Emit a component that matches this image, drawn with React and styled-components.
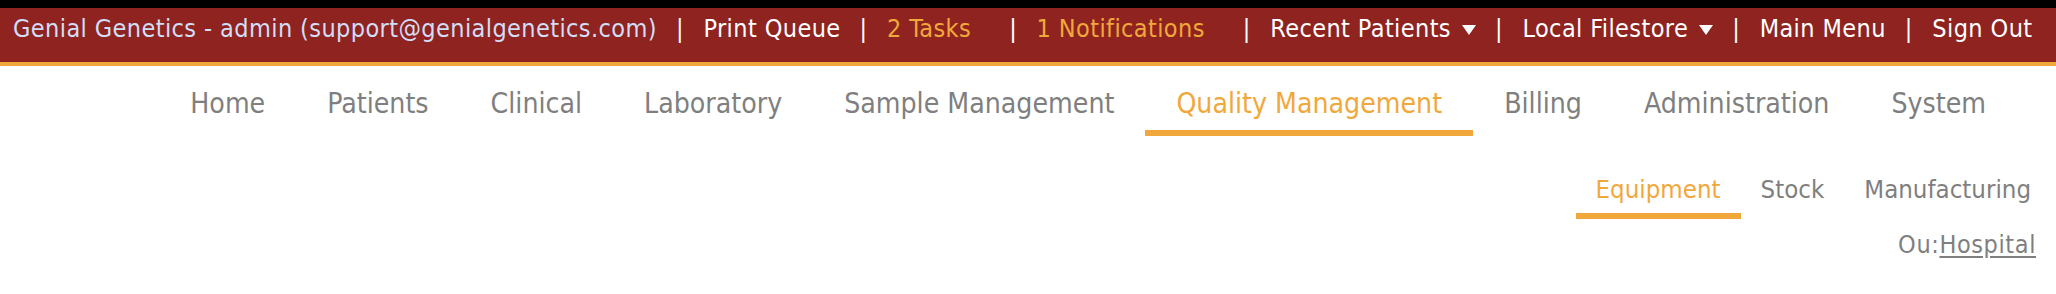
import React from "react";
import styled, { createGlobalStyle } from "styled-components";

const colors = {
  bar: "#8f231f",
  strip: "#000000",
  accent: "#f1a83b",
  user: "#d2ddf6",
  white: "#ffffff",
  grey: "#7f7f7f",
};

const font = `"DejaVu Sans Condensed", "DejaVu Sans", Tahoma, sans-serif`;

const GlobalStyle = createGlobalStyle`
  html, body {
    margin: 0;
    padding: 0;
    background: #ffffff;
  }
  body {
    font-family: ${font};
    font-stretch: condensed;
  }
`;

const Page = styled.div`
  display: flex;
  flex-direction: column;
  width: 2056px;
  height: 294px;
  overflow: hidden;
`;

const TopBar = styled.header`
  display: flex;
  align-items: flex-start;
  height: 48px;
  padding: 6px 0 0 13px;
  background-color: ${colors.bar};
  border-top: 8px solid ${colors.strip};
  border-bottom: 4px solid ${colors.accent};
  font-size: 25px;
  line-height: 30px;
  letter-spacing: 0.4px;
  white-space: nowrap;
`;

const TopLink = styled.a`
  display: flex;
  align-items: center;
  color: ${({ tone }) =>
    tone === "user"
      ? colors.user
      : tone === "alert"
      ? colors.accent
      : colors.white};
  padding-right: ${({ spaced }) => (spaced ? "19px" : "0")};
  text-decoration: none;
  cursor: pointer;
`;

const Separator = styled.span`
  color: ${colors.white};
  margin: 0 19.5px 0 19px;
`;

const Caret = styled.span`
  display: inline-block;
  width: 0;
  height: 0;
  margin-left: 11px;
  margin-top: 2px;
  border-left: 7px solid transparent;
  border-right: 7px solid transparent;
  border-top: 10px solid ${colors.white};
`;

const MainNav = styled.nav`
  display: flex;
  justify-content: flex-end;
  padding-right: 39px;
`;

const MainItem = styled.a`
  padding: 20px 31px 8px;
  font-size: 28.2px;
  line-height: 36px;
  color: ${({ active }) => (active ? colors.accent : colors.grey)};
  border-bottom: 6px solid
    ${({ active }) => (active ? colors.accent : "transparent")};
  text-decoration: none;
  cursor: pointer;
`;

const SubNav = styled.nav`
  display: flex;
  justify-content: flex-end;
  padding: 38px 5px 0 0;
`;

const SubItem = styled.a`
  padding: 0 20px 9px;
  font-size: 25.6px;
  line-height: 30px;
  color: ${({ active }) => (active ? colors.accent : colors.grey)};
  border-bottom: 6px solid
    ${({ active }) => (active ? colors.accent : "transparent")};
  text-decoration: none;
  cursor: pointer;
`;

const OuLine = styled.div`
  display: flex;
  justify-content: flex-end;
  padding: 11px 20px 0 0;
  font-size: 25px;
  line-height: 30px;
  letter-spacing: 0.6px;
  color: ${colors.grey};
`;

const OuLink = styled.a`
  color: ${colors.grey};
  text-decoration: underline;
  text-underline-offset: 3px;
  cursor: pointer;
`;

const topLinks = [
  { label: "Genial Genetics - admin (support@genialgenetics.com)", tone: "user" },
  { label: "Print Queue" },
  { label: "2 Tasks", tone: "alert", spaced: true },
  { label: "1 Notifications", tone: "alert", spaced: true },
  { label: "Recent Patients", caret: true },
  { label: "Local Filestore", caret: true },
  { label: "Main Menu" },
  { label: "Sign Out" },
];

const mainLinks = [
  "Home",
  "Patients",
  "Clinical",
  "Laboratory",
  "Sample Management",
  "Quality Management",
  "Billing",
  "Administration",
  "System",
];

const subLinks = ["Equipment", "Stock", "Manufacturing"];

export default function App() {
  return (
    <Page>
      <GlobalStyle />
      <TopBar>
        {topLinks.map((link, i) => (
          <React.Fragment key={link.label}>
            {i > 0 && <Separator>|</Separator>}
            <TopLink tone={link.tone} spaced={link.spaced}>
              {link.label}
              {link.caret && <Caret />}
            </TopLink>
          </React.Fragment>
        ))}
      </TopBar>
      <MainNav>
        {mainLinks.map((label) => (
          <MainItem key={label} active={label === "Quality Management"}>
            {label}
          </MainItem>
        ))}
      </MainNav>
      <SubNav>
        {subLinks.map((label) => (
          <SubItem key={label} active={label === "Equipment"}>
            {label}
          </SubItem>
        ))}
      </SubNav>
      <OuLine>
        Ou:<OuLink>Hospital</OuLink>
      </OuLine>
    </Page>
  );
}
